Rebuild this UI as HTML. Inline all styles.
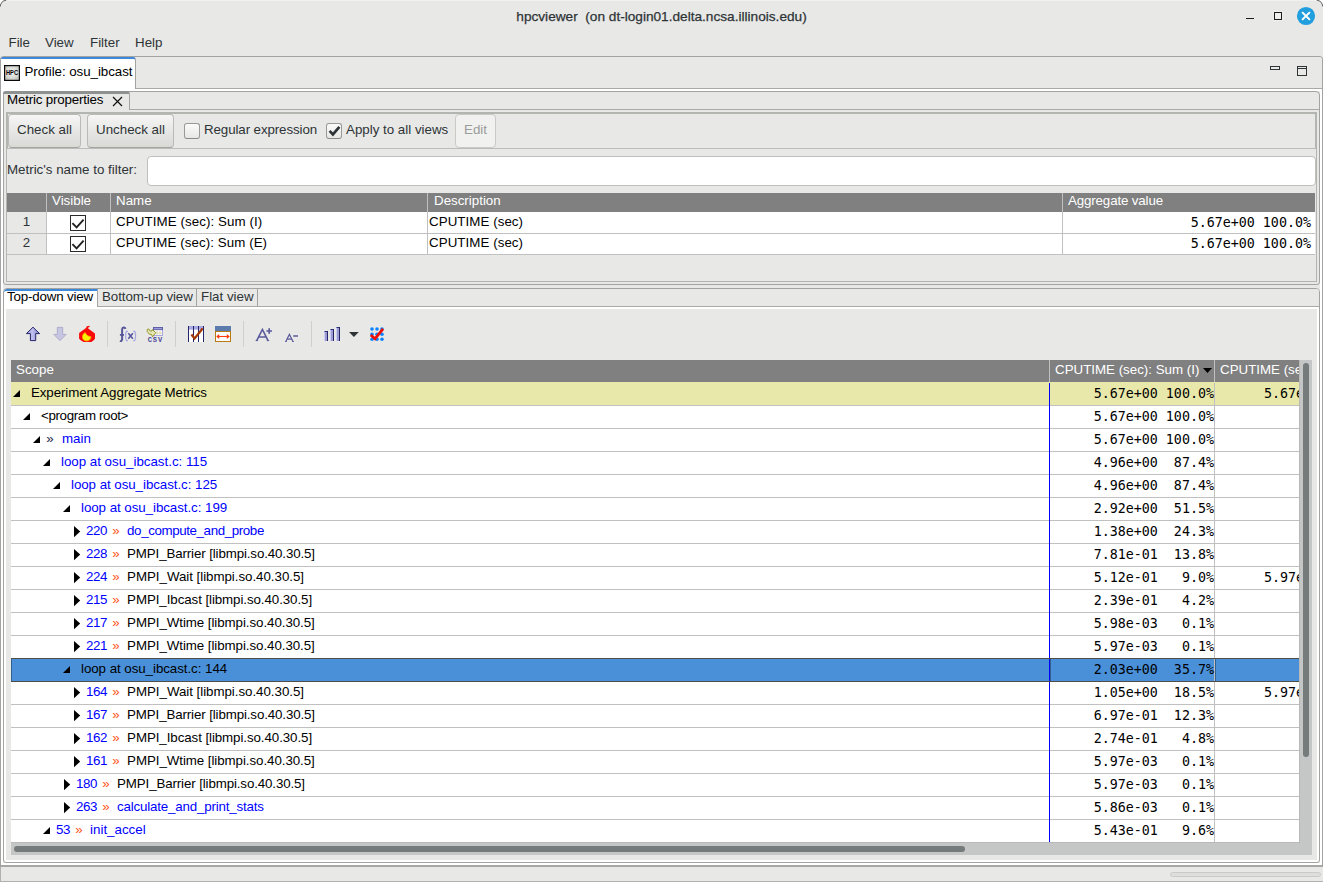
<!DOCTYPE html><html><head><meta charset="utf-8"><title>hpcviewer</title><style>html{background:#fff;}
body{margin:0;width:1323px;height:882px;overflow:hidden;position:relative;background:#e8e8e7;font-family:"Liberation Sans",sans-serif;font-size:13.33px;color:#000;}
.abs,.abs *{position:absolute;}
div,span,svg{position:absolute;box-sizing:border-box;white-space:nowrap;}
.title{left:0px;top:8px;width:1323px;text-align:center;font-size:13.65px;color:#2e3436;line-height:18px;white-space:pre;-webkit-text-stroke:0.25px #2e3436;}
.menu{top:33px;line-height:19px;color:#2e3436;}
.ln{background:#a9a9a7;}
.btn{border:1px solid #babab7;border-bottom-color:#a3a3a0;border-radius:4px;background:linear-gradient(#f6f6f5,#e4e4e2 60%,#d9d9d6);text-align:center;color:#2e3436;line-height:29px;}
.hdr{background:#808080;}
.ht{color:#fff;line-height:19px;}
.mono{font-family:"DejaVu Sans Mono",monospace;}
.tree{left:11px;top:383px;width:1288px;height:459px;background:#fff;overflow:hidden;}
.row{left:0;width:1288px;height:23px;border-bottom:1px solid #c0c0c0;background:#fff;}
.row.agg{background:#e8e8aa;}
.row.sel{background:#4a90d9;}
.tri{fill:#000;}
.t{top:0;line-height:19px;height:22px;white-space:pre;}
.i{position:static;}
.k{color:#000;}
.b{color:#0000ff;}
.cs{color:#ff5522;}
.cs0{color:#26264a;}
.v1,.v2{font-family:"DejaVu Sans Mono",monospace;top:-1px;line-height:23px;height:24px;}
.v1{left:1038px;width:166px;text-align:right;border-left:1px solid #0000ff;border-right:1px solid #c0c0c0;}
.v2{left:1253px;}

.gl{background:#c0c0c0;}
.cb{width:16px;height:16px;border:1px solid #999996;border-bottom-color:#8a8a87;border-radius:3px;background:linear-gradient(#fbfbfb,#e7e7e5);}

.row.sel{overflow:visible;z-index:2;}
.doth{height:1px;background:#514d49;}
.dotv{width:1px;background:rgba(15,25,35,0.4);}
.num{letter-spacing:-0.4px;margin-right:1.5px;}
</style></head><body>
<div class="title">hpcviewer  (on dt-login01.delta.ncsa.illinois.edu)</div>
<!-- window controls -->
<div style="left:0;top:0;width:1323px;height:1px;background:#f1f1f0"></div>
<svg style="left:0;top:0" width="8" height="8" viewBox="0 0 8 8"><path d="M0 0 L7 0 A7 7 0 0 0 0 7 Z" fill="#fff"/><path d="M0.3 6.6 A6.6 6.6 0 0 1 6.2 0.2" fill="none" stroke="#6a6a6a" stroke-width="1.1"/></svg>
<svg style="left:1315px;top:0" width="8" height="8" viewBox="0 0 8 8"><path d="M8 0 L1 0 A7 7 0 0 1 8 7 Z" fill="#fff"/><path d="M7.7 6.6 A6.6 6.6 0 0 0 1.8 0.2" fill="none" stroke="#6a6a6a" stroke-width="1.1"/></svg>
<div style="left:1246px;top:18px;width:8px;height:1.4px;background:#1c1c1c"></div>
<div style="left:1274px;top:12px;width:8.4px;height:8.4px;border:1.3px solid #1a1a1a;background:#efefee;box-shadow:0 0 0 0.6px #f6f6f5"></div>
<svg style="left:1296px;top:6px" width="20" height="20" viewBox="0 0 20 20"><circle cx="10" cy="10" r="9.1" fill="#209ede"/><path d="M6.1 6.1 L13.9 13.9 M13.9 6.1 L6.1 13.9" stroke="#fff" stroke-width="2"/></svg>
<span class="menu" style="left:8.5px">File</span>
<span class="menu" style="left:45px">View</span>
<span class="menu" style="left:90px">Filter</span>
<span class="menu" style="left:135px">Help</span>

<!-- outer panel: border x=0..1322, y=56..866 ; white inside -->
<div style="left:0;top:56px;width:1323px;height:811px;border:1px solid #a3a3a1;border-bottom:2px solid #a6a6a4;border-radius:4px 4px 0 0;background:#fff"></div>
<div style="left:3px;top:91px;width:1317px;height:772px;background:#e8e8e7"></div>
<!-- tab strip bg -->
<div style="left:1px;top:57px;width:1321px;height:31px;background:#e8e8e7;border-radius:3px 3px 0 0"></div>
<div class="ln" style="left:135px;top:88px;width:1187px;height:1px"></div>
<!-- profile tab -->
<div style="left:1px;top:57px;width:135px;height:32px;background:#fff;border-top:2px solid #3d88d9;border-right:1px solid #a3a3a1;border-radius:2px 3px 0 0"></div>
<svg style="left:4px;top:65px" width="16" height="16" viewBox="0 0 16 16"><defs><radialGradient id="hg" cx="0.5" cy="0.45" r="0.6"><stop offset="0" stop-color="#f4f4f2"/><stop offset="0.7" stop-color="#d6d6d2"/><stop offset="1" stop-color="#bdbdb8"/></radialGradient></defs><rect x="0.6" y="0.6" width="14.8" height="14.8" fill="url(#hg)" stroke="#0a0a0a" stroke-width="1.2"/><text x="8" y="10.3" font-family="Liberation Sans, sans-serif" font-size="6.4" font-weight="bold" text-anchor="middle" fill="#000" textLength="12" lengthAdjust="spacingAndGlyphs">HPC</text></svg>
<span id="t_profile" style="left:24.5px;top:62px;line-height:19px;letter-spacing:-0.05px">Profile: osu_ibcast</span>
<!-- min / max of panel -->
<div style="left:1270px;top:66px;width:10px;height:4px;border:1px solid #2e3436"></div>
<div style="left:1297px;top:66px;width:10px;height:10px;border:1px solid #2e3436"></div>
<div style="left:1297px;top:68px;width:10px;height:1px;background:#2e3436"></div>

<!-- Metric properties panel : x=3..1319, y=91..284 -->
<div style="left:3px;top:91px;width:1317px;height:194px;border:1px solid #a3a3a1;border-radius:4px 4px 3px 3px;background:#e8e8e7"></div>
<div class="ln" style="left:129px;top:109px;width:1190px;height:1px"></div>
<div style="left:3px;top:91px;width:127px;height:19px;border-top:3px solid #8f9190;border-right:1px solid #a3a3a1;border-radius:3px 3px 0 0"></div>
<span id="t_mprop" style="left:7px;top:90px;line-height:19px;letter-spacing:-0.18px">Metric properties</span>
<svg style="left:112px;top:96px" width="11" height="11" viewBox="0 0 11 11"><path d="M1 1 L10 10 M10 1 L1 10" stroke="#111" stroke-width="1.2"/></svg>
<!-- group box : x=6..1316 y=112..281 -->
<div style="left:6px;top:112px;width:1311px;height:170px;border:1px solid #b3b5b1"></div>
<div style="left:7px;top:113px;width:1309px;height:36px;border:1px solid #b3b5b1;border-bottom-color:#bcbdb9"></div>
<div class="btn" style="left:8px;top:114px;width:73px;height:34px">Check all</div>
<div class="btn" style="left:87px;top:114px;width:87px;height:34px">Uncheck all</div>
<div class="cb" style="left:184px;top:123px"></div>
<span style="left:204px;top:120px;line-height:19px;color:#2e3436;letter-spacing:-0.1px">Regular expression</span>
<div class="cb" style="left:326px;top:123px"></div>
<svg style="left:327px;top:124px" width="14" height="14" viewBox="0 0 14 14"><path d="M2.6 6.8 L5.9 10.4 L12.4 2.8" stroke="#2e3436" stroke-width="2.7" fill="none"/></svg>
<span style="left:346px;top:120px;line-height:19px;color:#2e3436">Apply to all views</span>
<div class="btn" style="left:455px;top:114px;width:41px;height:34px;color:#9a9c9a;background:#f1f1f0;box-shadow:none;border-color:#c9c9c6">Edit</div>
<span style="left:7px;top:160px;line-height:19px;color:#2e3436">Metric's name to filter:</span>
<div style="left:147px;top:156px;width:1169px;height:30px;border:1px solid #bfbfbc;border-radius:4px;background:#fff"></div>

<!-- metric table x=7..1315, header y=193..211 -->
<div class="hdr" style="left:7px;top:193px;width:1308px;height:19px"></div>
<div style="left:7px;top:212px;width:1308px;height:43px;background:#fff"></div>
<div style="left:7px;top:212px;width:39px;height:43px;background:#e8e8e7"></div>
<span class="ht" style="left:52px;top:191px">Visible</span>
<span class="ht" style="left:116px;top:191px">Name</span>
<span class="ht" style="left:434px;top:191px">Description</span>
<span class="ht" style="left:1068px;top:191px;letter-spacing:-0.14px">Aggregate value</span>
<!-- grid lines -->
<div class="gl" style="left:7px;top:233px;width:1308px;height:1px"></div>
<div class="gl" style="left:7px;top:254px;width:1308px;height:1px"></div>
<div class="gl" style="left:46px;top:193px;width:1px;height:62px"></div>
<div class="gl" style="left:110px;top:193px;width:1px;height:62px"></div>
<div class="gl" style="left:427px;top:193px;width:1px;height:62px"></div>
<div class="gl" style="left:1062px;top:193px;width:1px;height:62px"></div>
<span style="left:7px;top:212px;width:39px;text-align:center;line-height:19px;color:#2e3436">1</span>
<span style="left:7px;top:233px;width:39px;text-align:center;line-height:19px;color:#2e3436">2</span>
<div style="left:70px;top:215px;width:16px;height:16px;border:1px solid #2a2a2a;background:#fff"></div>
<svg style="left:70px;top:215px" width="16" height="16" viewBox="0 0 16 16"><path d="M2.4 8.2 L6.6 12.4 L13.6 4.6" stroke="#222" stroke-width="1.9" fill="none"/></svg>
<div style="left:70px;top:236px;width:16px;height:16px;border:1px solid #2a2a2a;background:#fff"></div>
<svg style="left:70px;top:236px" width="16" height="16" viewBox="0 0 16 16"><path d="M2.4 8.2 L6.6 12.4 L13.6 4.6" stroke="#222" stroke-width="1.9" fill="none"/></svg>
<span style="left:116px;top:212px;line-height:19px;letter-spacing:0.09px">CPUTIME (sec): Sum (I)</span>
<span style="left:116px;top:233px;line-height:19px;letter-spacing:0.07px">CPUTIME (sec): Sum (E)</span>
<span style="left:429px;top:212px;line-height:19px;letter-spacing:0.06px">CPUTIME (sec)</span>
<span style="left:429px;top:233px;line-height:19px;letter-spacing:0.06px">CPUTIME (sec)</span>
<span class="mono" style="left:1063px;top:212px;line-height:21px;width:248px;text-align:right">5.67e+00&nbsp;100.0%</span>
<span class="mono" style="left:1063px;top:233px;line-height:21px;width:248px;text-align:right">5.67e+00&nbsp;100.0%</span>

<!-- views panel x=3..1319, y=288..862 -->
<div style="left:3px;top:288px;width:1317px;height:575px;border:1px solid #a3a3a1;border-radius:4px 4px 3px 3px;background:#fff"></div>
<div style="left:4px;top:289px;width:1315px;height:17px;background:#e8e8e7;border-radius:3px 3px 0 0"></div>
<div class="ln" style="left:97px;top:306px;width:1222px;height:1px"></div>
<div style="left:4px;top:289px;width:94px;height:18px;background:#fff;border-top:2px solid #3d88d9;border-right:1px solid #a3a3a1;border-radius:3px 0 0 0"></div><div style="left:4px;top:306px;width:93px;height:3px;background:#fff"></div>
<div style="left:196px;top:289px;width:1px;height:17px;background:#a3a3a1"></div>
<div style="left:257px;top:289px;width:1px;height:17px;background:#a3a3a1"></div>
<span style="left:7px;top:287px;line-height:19px;letter-spacing:-0.16px">Top-down view</span>
<span style="left:102px;top:287px;line-height:19px;color:#2e3436;letter-spacing:-0.08px">Bottom-up view</span>
<span style="left:201px;top:287px;line-height:19px;color:#2e3436">Flat view</span>
<div style="left:6px;top:309px;width:1311px;height:551px;background:#e8e8e7"></div>
<!-- toolbar separators -->
<div style="left:107px;top:321px;width:1px;height:26px;background:#cfcfcc"></div>
<div style="left:175px;top:321px;width:1px;height:26px;background:#cfcfcc"></div>
<div style="left:243px;top:321px;width:1px;height:26px;background:#cfcfcc"></div>
<div style="left:311px;top:321px;width:1px;height:26px;background:#cfcfcc"></div>
<!-- up arrow -->
<svg style="left:24px;top:324px" width="20" height="20" viewBox="24 324 20 20"><defs><linearGradient id="gu" x1="0" x2="1"><stop offset="0" stop-color="#9a9ad4"/><stop offset="0.45" stop-color="#c0c0f0"/><stop offset="1" stop-color="#8080c4"/></linearGradient></defs><path d="M33 327.2 L39.6 333.6 L35.7 333.6 L35.7 340.6 L30.4 340.6 L30.4 333.6 L26.4 333.6 Z" fill="url(#gu)" stroke="#25256a" stroke-width="1" stroke-linejoin="miter"/></svg>
<!-- down arrow (disabled) -->
<svg style="left:50px;top:324px" width="20" height="20" viewBox="50 324 20 20"><path d="M57.3 327.4 L62.7 327.4 L62.7 334.4 L66.2 334.4 L60 340.6 L53.8 334.4 L57.3 334.4 Z" fill="#c6c6e2" stroke="#adadcd" stroke-width="1"/></svg>
<!-- flame -->
<svg style="left:77px;top:324px" width="20" height="20" viewBox="77 324 20 20"><path d="M86.8 326.2 L89.8 325.8 L89.4 327 L88.2 327.4 L88.2 328.6 L95 333.4 L95 338.8 L93.4 340.4 L91.4 341.9 L83.6 341.9 L81 340.4 L79.1 338.8 L79.1 333 L86 328 Z" fill="#fa0b0b"/><path d="M85.2 332.6 C86.5 335.5 88.5 336.6 91 336.6 C91 339 89.5 341 86.8 341 C84 341 82.4 339.2 82.4 337 C82.4 335 83.6 333.4 85.2 332.6 Z" fill="#f8f400"/><path d="M85.2 332.6 C86.5 335.5 88.5 336.6 91 336.6 C91 339 89.5 341 86.8 341 C84 341 82.4 339.2 82.4 337 C82.4 335 83.6 333.4 85.2 332.6 Z" fill="none" stroke="#ff9a00" stroke-width="0.8"/></svg>
<!-- f(x) -->
<svg style="left:118px;top:324px" width="20" height="20" viewBox="118 324 20 20"><path d="M122.1 340 L122.1 329.6 C122.1 327.2 124.8 326.9 125.5 328.9" fill="none" stroke="#56569a" stroke-width="2"/><path d="M122.1 339 C122.1 341 121 341.4 119.9 340.9" fill="none" stroke="#56569a" stroke-width="1.9"/><path d="M119.9 334.9 L124 334.9" stroke="#56569a" stroke-width="1.8"/><path d="M128 331.3 L126.6 331.3 C125.3 332.4 125.3 339.6 126.6 340.7 L128 340.7" fill="none" stroke="#a6a6e2" stroke-width="1.2"/><path d="M133.2 331.3 L134.6 331.3 C135.9 332.4 135.9 339.6 134.6 340.7 L133.2 340.7" fill="none" stroke="#a6a6e2" stroke-width="1.2"/><path d="M128.3 333.3 L132.9 338.7 M132.9 333.3 L128.3 338.7" stroke="#5252a0" stroke-width="1.5"/></svg>
<!-- csv -->
<svg style="left:146px;top:324px;opacity:0.995" width="20" height="20" viewBox="146 324 20 20"><rect x="153.5" y="327.5" width="9" height="8" fill="#fff" stroke="#a8a8e4"/><rect x="153.5" y="327.5" width="9" height="2.2" fill="#9a9adc" stroke="#5a5aa2" stroke-width="0.9"/><path d="M154 333 L162 333 M157 330.6 L157 335 M160 330.6 L160 335" stroke="#d6d2a4" stroke-width="0.9"/><path d="M147.2 329.6 L148.6 328.8 L150.2 331 L152 331 L152.4 329.6 L155.8 332.6 L152.6 336.8 L151.6 334.6 L149.4 334.2 L147.2 331.4 Z" fill="#e4e6b4" stroke="#84840a" stroke-width="0.8" stroke-linejoin="round"/><text x="147.7" y="341.9" font-family="Liberation Mono, monospace" font-weight="bold" font-size="7" fill="#4a4a9a" textLength="14.4" lengthAdjust="spacing">CSV</text></svg>
<!-- columns check -->
<svg style="left:186px;top:324px" width="20" height="20" viewBox="186 324 20 20"><rect x="188" y="326" width="16" height="16" fill="#fff"/><rect x="188" y="326" width="16" height="3.6" fill="#a9a9e2"/><path d="M188.5 326 L188.5 342 M193.5 326 L193.5 342 M198.5 326 L198.5 342 M203.5 326 L203.5 342" stroke="#24246a" stroke-width="1"/><path d="M191.4 334.6 L194.6 338.4 L202.6 328.6" fill="none" stroke="#a63a06" stroke-width="2.3"/></svg>
<!-- column width -->
<svg style="left:213px;top:324px" width="20" height="20" viewBox="213 324 20 20"><rect x="215" y="326" width="16" height="5.4" fill="#5a7bab"/><rect x="215.5" y="331.5" width="15" height="10" fill="#fff" stroke="#b97a14"/><path d="M217.4 336.5 L228.6 336.5" stroke="#ff3d10" stroke-width="1.1"/><path d="M216.2 336.5 L219.2 334 L219.2 339 Z M229.8 336.5 L226.8 334 L226.8 339 Z" fill="#ff3d10"/></svg>
<!-- A+ -->
<svg style="left:254px;top:324px" width="20" height="20" viewBox="254 324 20 20"><path d="M256.6 340.8 L262.4 329.4 L268.2 340.8 M258.8 337 L266 337" fill="none" stroke="#5b5b9c" stroke-width="1.6"/><path d="M255.6 340.6 L258 340.6 M266.8 340.6 L269.2 340.6" stroke="#5b5b9c" stroke-width="0.9"/><path d="M266.4 331 L272 331 M269.2 328.2 L269.2 333.8" stroke="#5b5b9c" stroke-width="1.7"/></svg>
<!-- A- -->
<svg style="left:282px;top:324px" width="20" height="20" viewBox="282 324 20 20"><path d="M285.8 341.4 L289.4 334.4 L293 341.4 M287.2 339.2 L291.6 339.2" fill="none" stroke="#5b5b9c" stroke-width="1.2"/><path d="M285 341.5 L287 341.5 M292 341.5 L294 341.5" stroke="#5b5b9c" stroke-width="0.8"/><path d="M293.2 336 L298 336" stroke="#5b5b9c" stroke-width="1.5"/></svg>
<!-- bars -->
<svg style="left:322px;top:324px" width="20" height="20" viewBox="322 324 20 20"><rect x="324" y="331" width="4" height="10" fill="#9c9cd2"/><rect x="324" y="331.6" width="1" height="9.4" fill="#ccccf8"/><rect x="327" y="331" width="1" height="10" fill="#24246a"/><rect x="324.6" y="331" width="3.4" height="0.9" fill="#24246a"/>
<rect x="330" y="329" width="4" height="12" fill="#9c9cd2"/><rect x="330" y="329.6" width="1" height="11.4" fill="#ccccf8"/><rect x="333" y="329" width="1" height="12" fill="#24246a"/><rect x="330.6" y="329" width="3.4" height="0.9" fill="#24246a"/>
<rect x="336" y="327" width="4" height="14" fill="#9c9cd2"/><rect x="336" y="327.6" width="1" height="13.4" fill="#ccccf8"/><rect x="339" y="327" width="1" height="14" fill="#24246a"/><rect x="336.6" y="327" width="3.4" height="0.9" fill="#24246a"/></svg>
<!-- dropdown -->
<svg style="left:348px;top:331px" width="12" height="7" viewBox="348 331 12 7"><path d="M349 332 L358.8 332 L353.9 337 Z" fill="#2e3436"/></svg>
<!-- dots check -->
<svg style="left:368px;top:324px" width="20" height="20" viewBox="368 324 20 20"><g fill="#0a84ff"><circle cx="372" cy="329" r="1.8"/><circle cx="377" cy="329" r="1.8"/><circle cx="382" cy="329" r="1.8"/><circle cx="372" cy="334.2" r="1.8"/><circle cx="377" cy="334.2" r="1.8"/><circle cx="382" cy="334.2" r="1.8"/><circle cx="372" cy="339.3" r="1.8"/><circle cx="377" cy="339.3" r="1.8"/><circle cx="382" cy="339.3" r="1.8"/></g><path d="M370.8 335 L375 338.8 L383 328.8" fill="none" stroke="#ee0f05" stroke-width="2.8"/></svg>

<!-- tree header y=360..381 -->
<div class="hdr" style="left:11px;top:360px;width:1288px;height:22px"></div>
<span class="ht" style="left:16px;top:360px">Scope</span>
<span class="ht" style="left:1055px;top:360px">CPUTIME (sec): Sum (I)</span>
<span class="ht" style="left:1220px;top:360px;width:79px;overflow:hidden">CPUTIME (sec): Sum (E)</span>
<div class="gl" style="left:1049px;top:360px;width:1px;height:22px"></div>
<div class="gl" style="left:1214px;top:360px;width:1px;height:22px"></div>
<svg style="left:1203px;top:368px" width="9" height="5" viewBox="0 0 9 5"><path d="M0 0 L9 0 L4.5 5 Z" fill="#000"/></svg>
<div style="left:11px;top:382px;width:1288px;height:1px;background:#e8e8aa"></div>

<div class="tree">
<div class="row agg" style="top:0px">
<svg class="tri" style="left:2px;top:7px" width="7" height="7" viewBox="0 0 7 7"><path d="M7 0 L7 7 L0 7 Z"/></svg>
<span class="t k" style="left:20px;letter-spacing:-0.096px">Experiment Aggregate Metrics</span>
<span class="v1">5.67e+00&nbsp;100.0%</span>
<span class="v2">5.67e+00&nbsp;100.0%</span>
</div>
<div class="row" style="top:23px">
<svg class="tri" style="left:12px;top:7px" width="7" height="7" viewBox="0 0 7 7"><path d="M7 0 L7 7 L0 7 Z"/></svg>
<span class="t k" style="left:30px;letter-spacing:-0.346px">&lt;program root&gt;</span>
<span class="v1">5.67e+00&nbsp;100.0%</span>
</div>
<div class="row" style="top:46px">
<svg class="tri" style="left:22px;top:7px" width="7" height="7" viewBox="0 0 7 7"><path d="M7 0 L7 7 L0 7 Z"/></svg>
<span class="t cs0" style="left:35.3px">»</span>
<span class="t b" style="left:51px">main</span>
<span class="v1">5.67e+00&nbsp;100.0%</span>
</div>
<div class="row" style="top:69px">
<svg class="tri" style="left:32px;top:7px" width="7" height="7" viewBox="0 0 7 7"><path d="M7 0 L7 7 L0 7 Z"/></svg>
<span class="t b" style="left:50px;letter-spacing:-0.013px">loop at osu_ibcast.c: 115</span>
<span class="v1">4.96e+00&nbsp;&nbsp;87.4%</span>
</div>
<div class="row" style="top:92px">
<svg class="tri" style="left:42px;top:7px" width="7" height="7" viewBox="0 0 7 7"><path d="M7 0 L7 7 L0 7 Z"/></svg>
<span class="t b" style="left:60px;letter-spacing:-0.054px">loop at osu_ibcast.c: 125</span>
<span class="v1">4.96e+00&nbsp;&nbsp;87.4%</span>
</div>
<div class="row" style="top:115px">
<svg class="tri" style="left:52px;top:7px" width="7" height="7" viewBox="0 0 7 7"><path d="M7 0 L7 7 L0 7 Z"/></svg>
<span class="t b" style="left:70px;letter-spacing:-0.054px">loop at osu_ibcast.c: 199</span>
<span class="v1">2.92e+00&nbsp;&nbsp;51.5%</span>
</div>
<div class="row" style="top:138px">
<svg class="tri" style="left:63px;top:5px" width="7" height="12" viewBox="0 0 7 12"><path d="M0 0 L6.2 5.6 L0 11.2 Z"/></svg>
<span class="t" style="left:75px"><span class="i b num">220</span> <span class="i cs">»</span>  <span class="i b" style="letter-spacing:-0.384px">do_compute_and_probe</span></span>
<span class="v1">1.38e+00&nbsp;&nbsp;24.3%</span>
</div>
<div class="row" style="top:161px">
<svg class="tri" style="left:63px;top:5px" width="7" height="12" viewBox="0 0 7 12"><path d="M0 0 L6.2 5.6 L0 11.2 Z"/></svg>
<span class="t" style="left:75px"><span class="i b num">228</span> <span class="i cs">»</span>  <span class="i k" style="letter-spacing:-0.126px">PMPI_Barrier [libmpi.so.40.30.5]</span></span>
<span class="v1">7.81e-01&nbsp;&nbsp;13.8%</span>
</div>
<div class="row" style="top:184px">
<svg class="tri" style="left:63px;top:5px" width="7" height="12" viewBox="0 0 7 12"><path d="M0 0 L6.2 5.6 L0 11.2 Z"/></svg>
<span class="t" style="left:75px"><span class="i b num">224</span> <span class="i cs">»</span>  <span class="i k" style="letter-spacing:-0.039px">PMPI_Wait [libmpi.so.40.30.5]</span></span>
<span class="v1">5.12e-01&nbsp;&nbsp;&nbsp;9.0%</span>
<span class="v2">5.97e-03&nbsp;&nbsp;&nbsp;0.1%</span>
</div>
<div class="row" style="top:207px">
<svg class="tri" style="left:63px;top:5px" width="7" height="12" viewBox="0 0 7 12"><path d="M0 0 L6.2 5.6 L0 11.2 Z"/></svg>
<span class="t" style="left:75px"><span class="i b num">215</span> <span class="i cs">»</span>  <span class="i k" style="letter-spacing:-0.08px">PMPI_Ibcast [libmpi.so.40.30.5]</span></span>
<span class="v1">2.39e-01&nbsp;&nbsp;&nbsp;4.2%</span>
</div>
<div class="row" style="top:230px">
<svg class="tri" style="left:63px;top:5px" width="7" height="12" viewBox="0 0 7 12"><path d="M0 0 L6.2 5.6 L0 11.2 Z"/></svg>
<span class="t" style="left:75px"><span class="i b num">217</span> <span class="i cs">»</span>  <span class="i k" style="letter-spacing:-0.066px">PMPI_Wtime [libmpi.so.40.30.5]</span></span>
<span class="v1">5.98e-03&nbsp;&nbsp;&nbsp;0.1%</span>
</div>
<div class="row" style="top:253px">
<svg class="tri" style="left:63px;top:5px" width="7" height="12" viewBox="0 0 7 12"><path d="M0 0 L6.2 5.6 L0 11.2 Z"/></svg>
<span class="t" style="left:75px"><span class="i b num">221</span> <span class="i cs">»</span>  <span class="i k" style="letter-spacing:-0.066px">PMPI_Wtime [libmpi.so.40.30.5]</span></span>
<span class="v1">5.97e-03&nbsp;&nbsp;&nbsp;0.1%</span>
</div>
<div class="row sel" style="top:276px">
<svg class="tri" style="left:52px;top:7px" width="7" height="7" viewBox="0 0 7 7"><path d="M7 0 L7 7 L0 7 Z"/></svg>
<span class="t k" style="left:70px;letter-spacing:-0.054px">loop at osu_ibcast.c: 144</span>
<span class="v1">2.03e+00&nbsp;&nbsp;35.7%</span>
<div class="doth" style="left:0;top:-1px;width:1288px"></div><div class="doth" style="left:0;top:22px;width:1288px"></div><div class="dotv" style="left:0;top:0;height:22px"></div><div class="dotv" style="left:1039px;top:0;height:22px"></div><div class="dotv" style="left:1204px;top:0;height:22px"></div>
</div>
<div class="row" style="top:299px">
<svg class="tri" style="left:63px;top:5px" width="7" height="12" viewBox="0 0 7 12"><path d="M0 0 L6.2 5.6 L0 11.2 Z"/></svg>
<span class="t" style="left:75px"><span class="i b num">164</span> <span class="i cs">»</span>  <span class="i k" style="letter-spacing:-0.039px">PMPI_Wait [libmpi.so.40.30.5]</span></span>
<span class="v1">1.05e+00&nbsp;&nbsp;18.5%</span>
<span class="v2">5.97e-03&nbsp;&nbsp;&nbsp;0.1%</span>
</div>
<div class="row" style="top:322px">
<svg class="tri" style="left:63px;top:5px" width="7" height="12" viewBox="0 0 7 12"><path d="M0 0 L6.2 5.6 L0 11.2 Z"/></svg>
<span class="t" style="left:75px"><span class="i b num">167</span> <span class="i cs">»</span>  <span class="i k" style="letter-spacing:-0.126px">PMPI_Barrier [libmpi.so.40.30.5]</span></span>
<span class="v1">6.97e-01&nbsp;&nbsp;12.3%</span>
</div>
<div class="row" style="top:345px">
<svg class="tri" style="left:63px;top:5px" width="7" height="12" viewBox="0 0 7 12"><path d="M0 0 L6.2 5.6 L0 11.2 Z"/></svg>
<span class="t" style="left:75px"><span class="i b num">162</span> <span class="i cs">»</span>  <span class="i k" style="letter-spacing:-0.08px">PMPI_Ibcast [libmpi.so.40.30.5]</span></span>
<span class="v1">2.74e-01&nbsp;&nbsp;&nbsp;4.8%</span>
</div>
<div class="row" style="top:368px">
<svg class="tri" style="left:63px;top:5px" width="7" height="12" viewBox="0 0 7 12"><path d="M0 0 L6.2 5.6 L0 11.2 Z"/></svg>
<span class="t" style="left:75px"><span class="i b num">161</span> <span class="i cs">»</span>  <span class="i k" style="letter-spacing:-0.066px">PMPI_Wtime [libmpi.so.40.30.5]</span></span>
<span class="v1">5.97e-03&nbsp;&nbsp;&nbsp;0.1%</span>
</div>
<div class="row" style="top:391px">
<svg class="tri" style="left:53px;top:5px" width="7" height="12" viewBox="0 0 7 12"><path d="M0 0 L6.2 5.6 L0 11.2 Z"/></svg>
<span class="t" style="left:65px"><span class="i b num">180</span> <span class="i cs">»</span>  <span class="i k" style="letter-spacing:-0.126px">PMPI_Barrier [libmpi.so.40.30.5]</span></span>
<span class="v1">5.97e-03&nbsp;&nbsp;&nbsp;0.1%</span>
</div>
<div class="row" style="top:414px">
<svg class="tri" style="left:53px;top:5px" width="7" height="12" viewBox="0 0 7 12"><path d="M0 0 L6.2 5.6 L0 11.2 Z"/></svg>
<span class="t" style="left:65px"><span class="i b num">263</span> <span class="i cs">»</span>  <span class="i b" style="letter-spacing:-0.179px">calculate_and_print_stats</span></span>
<span class="v1">5.86e-03&nbsp;&nbsp;&nbsp;0.1%</span>
</div>
<div class="row" style="top:437px">
<svg class="tri" style="left:32px;top:7px" width="7" height="7" viewBox="0 0 7 7"><path d="M7 0 L7 7 L0 7 Z"/></svg>
<span class="t" style="left:45px"><span class="i b num">53</span> <span class="i cs">»</span>  <span class="i b" style="">init_accel</span></span>
<span class="v1">5.43e-01&nbsp;&nbsp;&nbsp;9.6%</span>
</div>
</div>
<!-- scrollbars -->
<div style="left:11px;top:842px;width:1301px;height:13px;background:#c4c7c5;border-top:1px solid #b9bab8"></div>
<div style="left:1299px;top:360px;width:13px;height:483px;background:#c4c7c5;border-left:1px solid #b9bab8"></div>
<div style="left:1303px;top:363px;width:6px;height:394px;background:#757a7a;border-radius:3px"></div>
<div style="left:14px;top:846px;width:951px;height:6px;background:#757a7a;border-radius:3px"></div>
<!-- status bar -->
<div style="left:0;top:867px;width:1323px;height:15px;background:#e8e8e7;border-bottom:1px solid #b0b0ae;border-left:1px solid #b0b0ae"></div>
<div style="left:1170px;top:872px;width:151px;height:5px;background:#dededc;border:1px solid #cacac7;border-radius:2.5px"></div>

</body></html>
